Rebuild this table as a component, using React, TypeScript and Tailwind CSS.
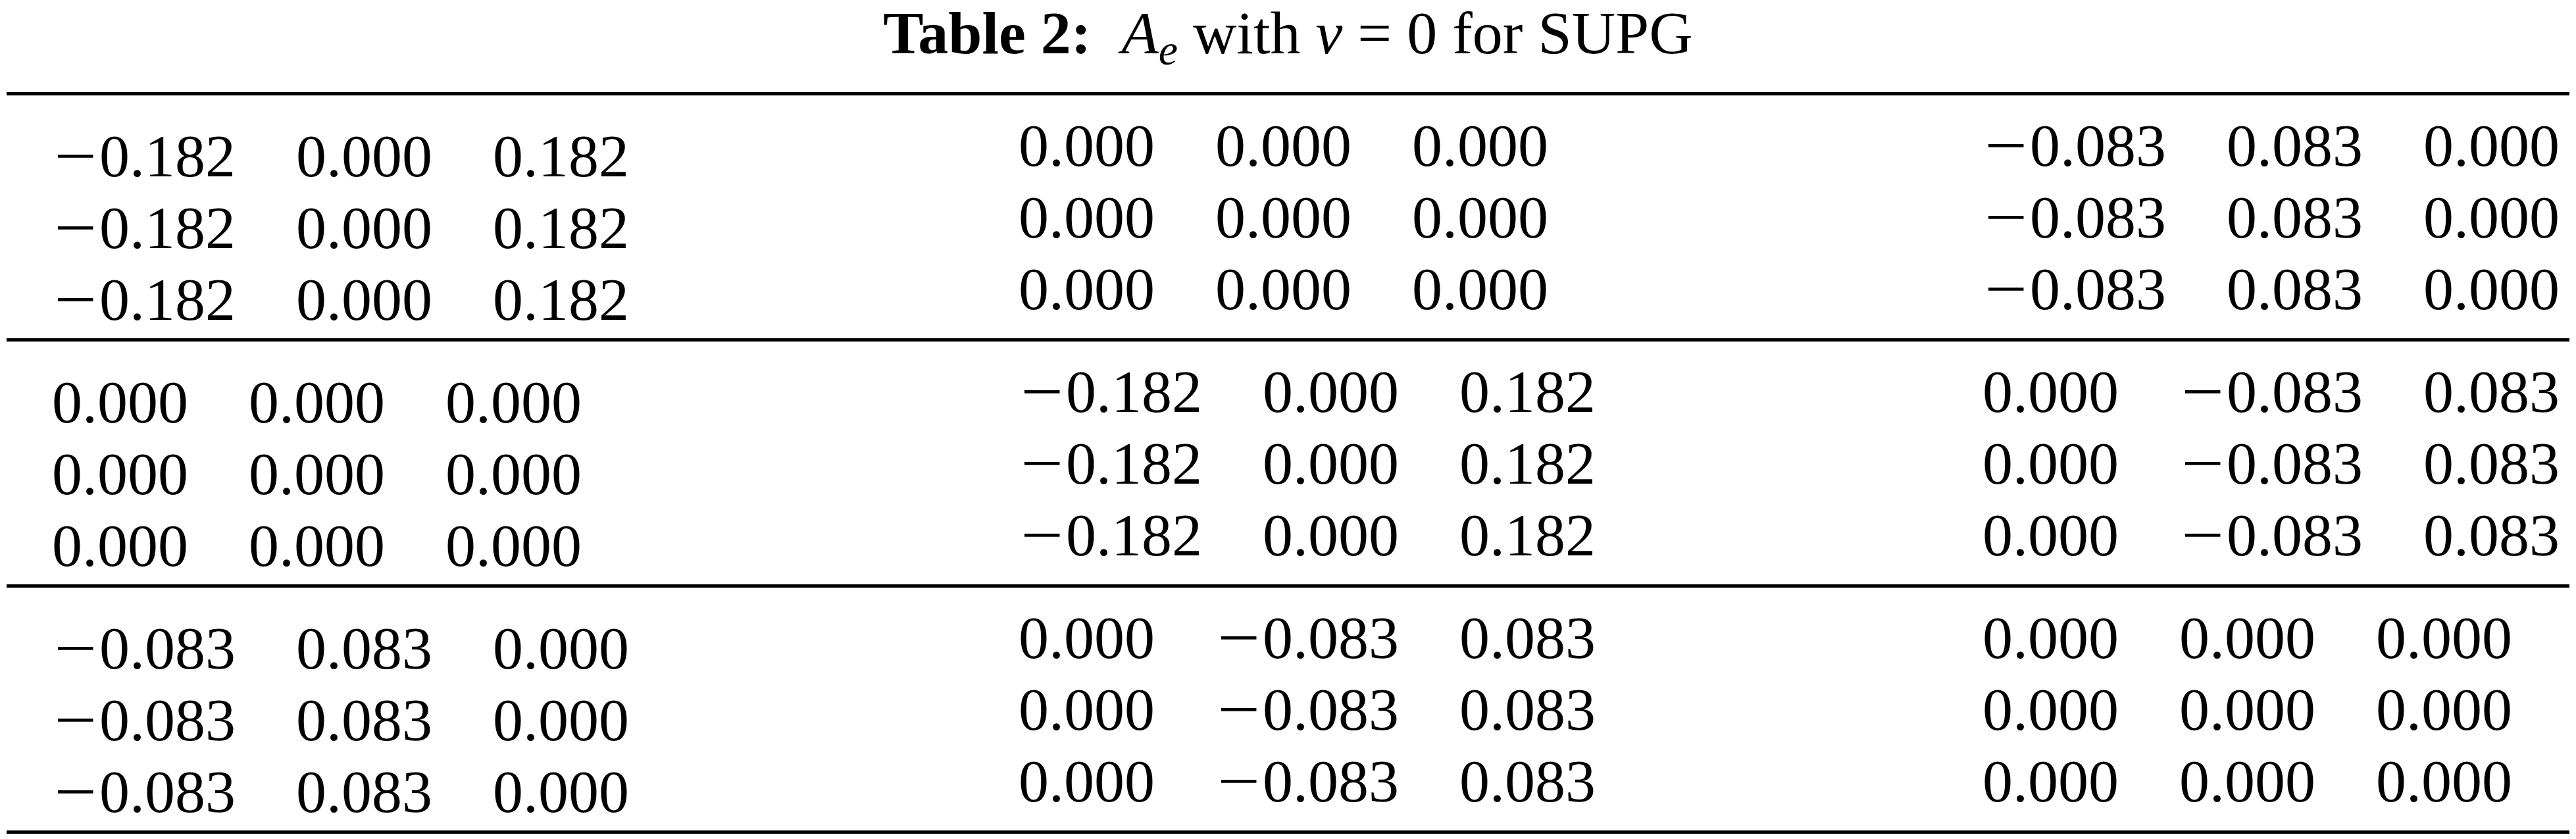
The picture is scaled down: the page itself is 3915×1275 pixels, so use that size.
const blocks = [
	[
		["−0.182", "0.000", "0.182"],
		["0.000", "0.000", "0.000"],
		["−0.083", "0.083", "0.000"],
	],
	[
		["0.000", "0.000", "0.000"],
		["−0.182", "0.000", "0.182"],
		["0.000", "−0.083", "0.083"],
	],
	[
		["−0.083", "0.083", "0.000"],
		["0.000", "−0.083", "0.083"],
		["0.000", "0.000", "0.000"],
	],
]

function Num({ value }: { value: string }) {
	const negative = value.startsWith("−")
	return (
		<span className="whitespace-nowrap">
			{negative && (
				<span className="inline-block w-[72px] text-center">
					<span className="inline-block scale-x-[1.25]">−</span>
				</span>
			)}
			{negative ? value.slice(1) : value}
		</span>
	)
}

function Matrix({ row, first }: { row: string[]; first: boolean }) {
	return (
		<div className={`grid grid-cols-[auto_auto_auto] content-start self-start gap-x-[92px] w-fit leading-[109px] ${first ? "pt-[38px] pb-[4px]" : "pt-[22px]"}`}>
			{[0, 1, 2].map((r) =>
				row.map((v, c) => <Num key={`${r}-${c}`} value={v} />)
			)}
		</div>
	)
}

export default function App() {
	return (
		<div className="w-[3915px] h-[1275px] bg-white text-black font-['Liberation_Serif',serif] text-[92px]">
			<div className="h-[140px] pt-[4px] text-center leading-none whitespace-nowrap">
				<span className="font-bold">Table 2:</span>
				<span className="ml-[46px] italic">A</span>
				<sub className="italic text-[66px]">e</sub> with <span className="italic">v</span> = 0 for SUPG
			</div>
			<div className="mx-[10px] border-b-[5px] border-black">
				{blocks.map((block, i) => (
					<div key={i} className="grid grid-cols-[1469px_1465px_1fr] pl-[69px] border-t-[5px] border-black">
						{block.map((m, j) => (
							<Matrix key={j} row={m} first={j === 0} />
						))}
					</div>
				))}
			</div>
		</div>
	)
}
